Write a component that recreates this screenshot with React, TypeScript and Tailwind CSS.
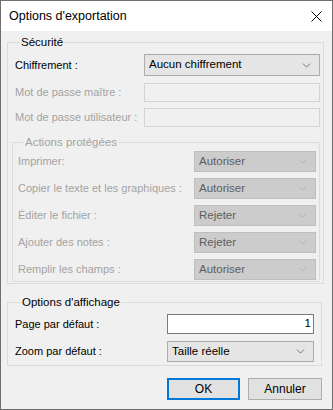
import { ChevronDown } from 'lucide-react';

const font = { fontFamily: '"Liberation Sans", Arial, sans-serif' };

interface SelectProps {
  value: string;
  disabled?: boolean;
  className?: string;
}

function Select({ value, disabled = false, className = '' }: SelectProps) {
  return (
    <div
      className={`flex items-center justify-between pl-[4px] pr-[6px] border text-[11.5px] shrink-0 ${
        disabled
          ? 'bg-[#cccccc] border-[#bfbfbf] text-[#5e5e5e]'
          : 'bg-[#e5e5e5] border-[#acacac] text-black'
      } ${className}`}
    >
      <span>{value}</span>
      <ChevronDown
        size={13}
        strokeWidth={1.2}
        className={disabled ? 'text-[#a6a6a6]' : 'text-[#404040]'}
      />
    </div>
  );
}

const actions: [string, string][] = [
  ['Imprimer:', 'Autoriser'],
  ['Copier le texte et les graphiques :', 'Autoriser'],
  ['Éditer le fichier :', 'Rejeter'],
  ['Ajouter des notes :', 'Rejeter'],
  ['Remplir les champs :', 'Autoriser'],
];

export default function App() {
  return (
    <div
      style={font}
      className="w-[333px] h-[410px] border border-[#6f6f6f] bg-[#f0f0f0] flex flex-col text-[11px] text-black whitespace-nowrap"
    >
      {/* title bar */}
      <div className="h-[30px] bg-white flex items-center justify-between pl-[8px] pr-[10px] shrink-0">
        <span className="text-[12.5px]">Options d'exportation</span>
        <svg width="11" height="11" viewBox="0 0 11 11" className="text-black">
          <path d="M0.5 0.5 L10.5 10.5 M10.5 0.5 L0.5 10.5" stroke="currentColor" strokeWidth="1" />
        </svg>
      </div>

      {/* Sécurité */}
      <fieldset className="mt-[4px] ml-[6px] w-[315px] h-[249px] shrink-0 border border-[#dcdcdc] pl-[7px] pr-[3px]">
        <legend className="px-[1px] ml-[5px] leading-[14px] text-[11.5px]">Sécurité</legend>
        <div className="flex items-center justify-between mt-[5px]">
          <span>Chiffrement :</span>
          <Select value="Aucun chiffrement" className="w-[176px] h-[22px]" />
        </div>
        <div className="flex items-center justify-between mt-[7px] text-[#a3a3a3]">
          <span>Mot de passe maître :</span>
          <div className="w-[176px] h-[19px] shrink-0 border border-[#d4d4d4] bg-[#f0f0f0]" />
        </div>
        <div className="flex items-center justify-between mt-[6px] text-[#a3a3a3]">
          <span>Mot de passe utilisateur :</span>
          <div className="w-[176px] h-[19px] shrink-0 border border-[#d4d4d4] bg-[#f0f0f0]" />
        </div>

        {/* Actions protégées */}
        <fieldset className="mt-[8px] -ml-[3px] w-[308px] h-[147px] border border-[#dcdcdc] pl-[5px] pr-[3px] text-[#a3a3a3]">
          <legend className="px-[1px] ml-[6px] leading-[14px] text-[11.5px]">Actions protégées</legend>
          <div className="flex flex-col gap-[6px] mt-[2px]">
            {actions.map(([label, value]) => (
              <div key={label} className="flex items-center justify-between">
                <span>{label}</span>
                <Select value={value} disabled className="w-[122px] h-[21px]" />
              </div>
            ))}
          </div>
        </fieldset>
      </fieldset>

      {/* Options d'affichage */}
      <fieldset className="mt-[11px] ml-[6px] w-[315px] h-[71px] shrink-0 border border-[#dcdcdc] pl-[7px] pr-[7px]">
        <legend className="px-[1px] ml-[6px] leading-[14px] text-[11.5px]">Options d'affichage</legend>
        <div className="flex items-center justify-between mt-[5px]">
          <span>Page par défaut :</span>
          <div className="w-[147px] h-[20px] shrink-0 border border-[#7a7a7a] bg-white flex items-center justify-end pr-[2px] text-[11.5px]">
            1
          </div>
        </div>
        <div className="flex items-center justify-between mt-[7px]">
          <span>Zoom par défaut :</span>
          <Select value="Taille réelle" className="w-[147px] h-[21px]" />
        </div>
      </fieldset>

      {/* buttons */}
      <div className="flex justify-end gap-[8px] mt-[12px] pr-[10px]">
        <button className="w-[73px] h-[22px] border-2 border-[#0078d7] bg-[#e1e1e1] text-[12px]">OK</button>
        <button className="w-[74px] h-[22px] border border-[#adadad] bg-[#e1e1e1] text-[12px]">Annuler</button>
      </div>
    </div>
  );
}
